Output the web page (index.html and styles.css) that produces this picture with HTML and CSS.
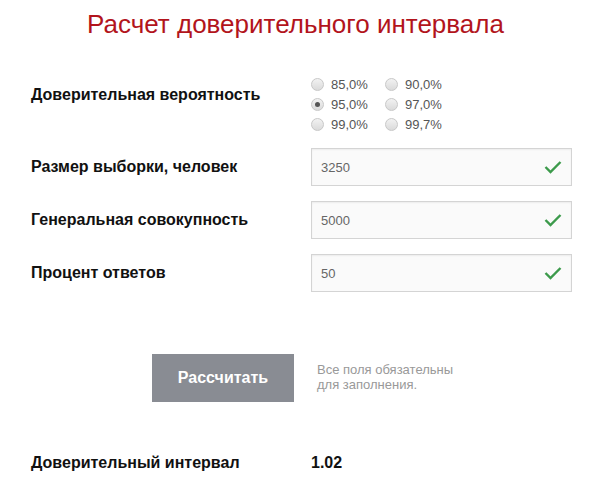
FILE: index.html
```html
<!DOCTYPE html>
<html>

<head>
    <title>Расчет доверительного интервала</title>
    <link rel="stylesheet" href="styles.css">
</head>

<body>
    <div class="calc-container">
        <h1 class="calc-title">Расчет доверительного интервала</h1>

        <div class="calc-row calc-row-radio">
            <div class="calc-label">Доверительная вероятность</div>
            <div class="calc-radios">
                <label class="calc-radio"><span class="radio-dot"></span>85,0%</label>
                <label class="calc-radio"><span class="radio-dot"></span>90,0%</label>
                <label class="calc-radio"><span class="radio-dot checked"></span>95,0%</label>
                <label class="calc-radio"><span class="radio-dot"></span>97,0%</label>
                <label class="calc-radio"><span class="radio-dot"></span>99,0%</label>
                <label class="calc-radio"><span class="radio-dot"></span>99,7%</label>
            </div>
        </div>

        <div class="calc-row">
            <div class="calc-label">Размер выборки, человек</div>
            <div class="calc-input">
                <span class="calc-value">3250</span>
                <svg class="calc-check" viewBox="0 0 18 14"><polyline points="1.5,7 6.5,12 16.5,2" /></svg>
            </div>
        </div>

        <div class="calc-row">
            <div class="calc-label">Генеральная совокупность</div>
            <div class="calc-input">
                <span class="calc-value">5000</span>
                <svg class="calc-check" viewBox="0 0 18 14"><polyline points="1.5,7 6.5,12 16.5,2" /></svg>
            </div>
        </div>

        <div class="calc-row">
            <div class="calc-label">Процент ответов</div>
            <div class="calc-input">
                <span class="calc-value">50</span>
                <svg class="calc-check" viewBox="0 0 18 14"><polyline points="1.5,7 6.5,12 16.5,2" /></svg>
            </div>
        </div>

        <div class="calc-actions">
            <button class="calc-button">Рассчитать</button>
            <div class="calc-note">Все поля обязательны<br>для заполнения.</div>
        </div>

        <div class="calc-result">
            <div class="calc-label">Доверительный интервал</div>
            <div class="calc-result-value">1.02</div>
        </div>
    </div>
</body>

</html>
```

FILE: styles.css
```css
body {
    font-family: "Liberation Sans", Arial, sans-serif;
    background-color: #fff;
    color: #111;
    margin: 0;
    padding: 0;
}

.calc-container {
    width: 591px;
    padding: 0 0 0 31px;
    box-sizing: border-box;
}

.calc-title {
    margin: 9px 0 0 -31px;
    font-size: 26px;
    font-weight: normal;
    line-height: 30px;
    color: #b2141c;
    text-align: center;
}

.calc-row {
    display: flex;
    align-items: center;
    margin-bottom: 15px;
}

.calc-row-radio {
    align-items: flex-start;
    margin-top: 36px;
    margin-bottom: 14px;
}

.calc-row-radio .calc-label {
    padding-top: 11px;
}

.calc-label {
    width: 280px;
    font-size: 16px;
    font-weight: bold;
    color: #111;
}

.calc-radios {
    display: grid;
    grid-template-columns: 74px 74px;
    row-gap: 1px;
}

.calc-radio {
    display: flex;
    align-items: center;
    height: 19px;
    font-size: 13px;
    color: #555;
}

.radio-dot {
    width: 11px;
    height: 11px;
    margin-right: 7px;
    border: 1px solid #c8c8c8;
    border-radius: 50%;
    background: linear-gradient(#f2f2f2, #dadada);
    position: relative;
}

.radio-dot.checked::after {
    content: "";
    position: absolute;
    top: 3px;
    left: 3px;
    width: 5px;
    height: 5px;
    border-radius: 50%;
    background-color: #555;
}

.calc-input {
    display: flex;
    align-items: center;
    justify-content: space-between;
    width: 261px;
    height: 38px;
    padding: 0 9px 0 9px;
    box-sizing: border-box;
    border: 1px solid #d4d4d4;
    background-color: #fafafa;
    box-shadow: inset 0 1px 2px rgba(0, 0, 0, 0.06);
}

.calc-value {
    font-size: 13px;
    color: #666;
}

.calc-check {
    width: 18px;
    height: 14px;
}

.calc-check polyline {
    fill: none;
    stroke: #3c9a4b;
    stroke-width: 2.4;
}

.calc-actions {
    display: flex;
    align-items: center;
    margin: 62px 0 0 121px;
}

.calc-button {
    width: 142px;
    height: 48px;
    border: none;
    background-color: #898c93;
    color: #fff;
    font-family: inherit;
    font-size: 16px;
    font-weight: bold;
    cursor: pointer;
}

.calc-note {
    margin-left: 23px;
    margin-top: -2px;
    font-size: 13px;
    line-height: 15px;
    color: #999;
}

.calc-result {
    display: flex;
    align-items: center;
    margin-top: 52px;
}

.calc-result-value {
    font-size: 16px;
    font-weight: bold;
    color: #111;
}
```
